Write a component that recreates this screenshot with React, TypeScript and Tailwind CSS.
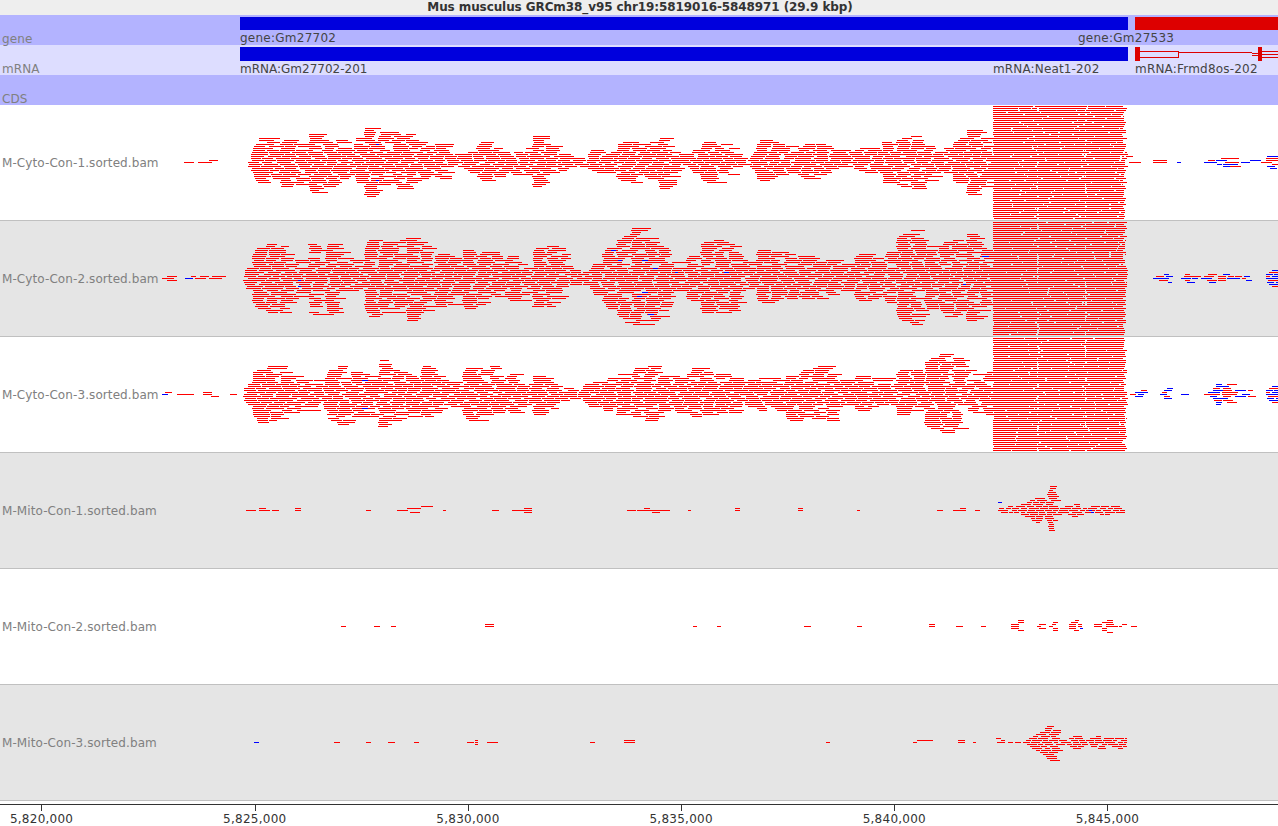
import { useMemo } from "react";

// [x, px above centre, px below centre]
type Env = [number, number, number][];
// [x1, x2, row, blue]
type Read = [number, number, number, number?];

interface TrackDef {
  name: string;
  shaded: boolean;
  env: Env;
  reads: Read[];
  block: boolean;
  seed: number;
}

const envCyto1: Env = [
  [246, 0, 0], [260, 24, 24], [270, 20, 14], [283, 20, 24], [297, 26, 24], [303, 4, 4], [310, 28, 28], [323, 24, 28],
  [327, 19, 21], [347, 24, 22], [352, 8, 6], [363, 34, 29], [373, 30, 32], [390, 22, 12], [403, 36, 34], [417, 20, 19],
  [427, 22, 14], [447, 20, 20], [455, 7, 3], [467, 8, 6], [482, 22, 19], [498, 22, 20], [507, 7, 6], [517, 16, 16],
  [522, 4, 4], [530, 24, 21], [543, 26, 26], [550, 14, 11], [563, 14, 9], [570, 3, 3], [580, 6, 6], [587, 1, 1],
  [590, 12, 11], [600, 12, 8], [605, 4, 4], [613, 16, 14], [633, 24, 23], [647, 21, 16], [660, 26, 26], [677, 16, 16],
  [685, 1, 1], [697, 16, 13], [710, 24, 24], [717, 14, 18], [727, 24, 24], [740, 7, 6], [748, 2, 2], [760, 21, 18],
  [777, 22, 20], [793, 14, 9], [810, 18, 18], [830, 14, 9], [847, 11, 3], [867, 16, 11], [887, 19, 19], [903, 24, 24],
  [920, 24, 23], [933, 16, 18], [942, 7, 6], [947, 16, 14], [970, 30, 30], [983, 26, 26], [994, 26, 26],
];

const envCyto2: Env = [
  [243, 1, 1], [247, 14, 14], [258, 30, 30], [273, 32, 32], [293, 28, 28], [302, 8, 6], [310, 36, 34], [318, 27, 29],
  [323, 1, 1], [328, 37, 38], [340, 38, 36], [347, 19, 14], [360, 14, 9], [368, 42, 41], [380, 40, 39], [390, 26, 19],
  [405, 44, 44], [413, 34, 36], [427, 33, 33], [437, 20, 23], [447, 27, 28], [457, 16, 14], [468, 30, 28], [480, 22, 24],
  [490, 31, 29], [503, 14, 13], [513, 24, 23], [522, 16, 14], [533, 30, 29], [543, 32, 29], [557, 29, 24], [567, 24, 13],
  [573, 7, 6], [580, 8, 8], [587, 4, 3], [595, 14, 14], [612, 32, 31], [630, 51, 50], [640, 41, 31], [655, 46, 46],
  [665, 36, 36], [677, 7, 8], [690, 24, 24], [713, 38, 36], [727, 29, 29], [740, 30, 30], [747, 11, 4], [753, 22, 14],
  [770, 34, 33], [780, 22, 18], [813, 22, 21], [833, 20, 19], [847, 16, 13], [860, 26, 24], [873, 22, 19], [882, 17, 14],
  [887, 28, 28], [905, 44, 41], [920, 42, 39], [933, 22, 23], [947, 44, 42], [960, 41, 38], [977, 39, 38], [988, 26, 24],
  [994, 26, 24],
];

const envCyto3: Env = [
  [243, 1, 1], [248, 14, 14], [262, 30, 30], [270, 24, 23], [287, 24, 21], [298, 22, 19], [302, 4, 6], [307, 14, 11],
  [317, 18, 16], [322, 4, 3], [330, 27, 26], [340, 32, 32], [353, 18, 21], [363, 24, 14], [370, 14, 23], [382, 34, 32],
  [393, 20, 23], [405, 29, 30], [413, 16, 14], [423, 24, 24], [437, 24, 14], [450, 16, 14], [457, 11, 9], [468, 26, 26],
  [483, 26, 24], [497, 24, 21], [507, 14, 13], [517, 26, 24], [523, 7, 13], [533, 20, 21], [548, 22, 23], [560, 11, 8],
  [580, 2, 3], [588, 16, 11], [600, 7, 14], [617, 26, 26], [627, 9, 14], [637, 26, 24], [653, 34, 34], [663, 19, 14],
  [677, 14, 18], [680, 9, 11], [693, 22, 19], [712, 26, 26], [723, 18, 18], [737, 20, 20], [743, 7, 6], [757, 20, 18],
  [770, 11, 11], [783, 20, 19], [793, 14, 24], [807, 24, 22], [833, 30, 28], [847, 11, 8], [870, 20, 20], [883, 7, 6],
  [900, 26, 24], [913, 28, 14], [927, 29, 28], [947, 42, 39], [963, 32, 31], [973, 26, 26], [978, 5, 3], [987, 20, 18],
  [994, 20, 18],
];

const envMito1: Env = [
  [995, 8, 8], [1003, 2, 2], [1010, 5, 2], [1018, 4, 3], [1027, 8, 6], [1038, 12, 12], [1047, 10, 10], [1051, 29, 28],
  [1055, 20, 15], [1060, 2, 2], [1073, 5, 5], [1080, 7, 5], [1085, 2, 2], [1092, 4, 2], [1103, 4, 4], [1117, 6, 4],
  [1125, 0, 2],
];

const envMito3: Env = [
  [995, 6, 4], [1005, 2, 1], [1025, 1, 1], [1030, 4, 4], [1040, 8, 8], [1052, 16, 16], [1057, 16, 16], [1063, 2, 2],
  [1077, 6, 6], [1087, 2, 2], [1102, 10, 8], [1108, 3, 3], [1120, 6, 6], [1127, 4, 4],
];

const rightMix: Read[] = [
  [1272, 1278, -4, 1], [1269, 1278, -3], [1266, 1273, -2, 1], [1274, 1278, -2, 1], [1266, 1270, -1], [1272, 1278, -1, 1],
  [1266, 1278, 0, 1], [1268, 1278, 1], [1267, 1274, 2, 1], [1276, 1278, 2, 1], [1269, 1278, 3, 1], [1272, 1278, 4],
];

const tracks: TrackDef[] = [
  {
    name: "M-Cyto-Con-1.sorted.bam",
    shaded: false,
    env: envCyto1,
    block: true,
    seed: 11,
    reads: [
      [184, 194, 0], [198, 212, 0], [209, 218, -1], [1129, 1141, 0], [1126, 1133, -3],
      [1153, 1167, -1], [1153, 1167, 0], [1177, 1181, 0, 1], [1204, 1217, 0, 1], [1208, 1215, -1],
      [1216, 1227, -1, 1], [1221, 1239, -2], [1217, 1222, 1, 1], [1223, 1238, 1, 1], [1223, 1230, 2, 1],
      [1230, 1241, 2], [1225, 1239, 0], [1241, 1250, 0, 1], [1250, 1261, -1, 1], [1261, 1272, 0],
      [1266, 1278, -2], [1267, 1278, -3, 1], [1266, 1278, -1], [1272, 1278, 1], [1267, 1275, 2, 1], [1270, 1277, 3, 1],
      [376, 379, -9, 1], [376, 379, 9, 1],
    ],
  },
  {
    name: "M-Cyto-Con-2.sorted.bam",
    shaded: true,
    env: envCyto2,
    block: true,
    seed: 23,
    reads: [
      [162, 174, 0], [167, 177, -1], [167, 177, 1], [185, 193, 0, 1], [191, 196, -1], [195, 206, 0], [200, 209, -1],
      [209, 222, 0], [212, 226, -1], [298, 301, 1, 1], [298, 301, 4, 1], [611, 616, -14, 1], [618, 622, -9, 1],
      [642, 648, -9, 1], [653, 658, -5, 1], [675, 678, -3, 1], [642, 648, 7, 1], [637, 642, 9, 1], [648, 654, 18, 1],
      [724, 729, -3, 1], [963, 966, 3, 1], [982, 989, -11, 1], [1164, 1169, -2, 1], [1156, 1164, -1], [1166, 1173, -1, 1],
      [1153, 1169, 0, 1], [1159, 1168, 1], [1168, 1172, 2, 1], [1185, 1190, -2], [1184, 1201, -1], [1181, 1191, 0, 1],
      [1192, 1198, 0, 1], [1185, 1190, 1], [1187, 1195, 2, 1], [1208, 1217, -2], [1204, 1214, -1], [1201, 1212, 0, 1],
      [1207, 1217, 1], [1209, 1216, 2, 1], [1223, 1230, -2, 1], [1218, 1226, -1], [1228, 1234, -1], [1235, 1242, -1],
      [1218, 1226, 0], [1227, 1240, 0, 1], [1242, 1246, 0], [1218, 1226, 1], [1244, 1250, -1, 1], [1246, 1252, 1, 1],
      ...rightMix,
    ],
  },
  {
    name: "M-Cyto-Con-3.sorted.bam",
    shaded: false,
    env: envCyto3,
    block: true,
    seed: 37,
    reads: [
      [162, 168, 0, 1], [165, 172, -1], [177, 194, 0], [203, 212, -1], [203, 212, 0], [211, 219, 1], [230, 237, 0],
      [362, 368, -7, 1], [362, 368, 7, 1], [1130, 1136, 0], [1141, 1147, -2], [1135, 1148, -1, 1], [1138, 1144, 0, 1],
      [1135, 1143, 1, 1], [1167, 1173, -3, 1], [1164, 1172, -2, 1], [1162, 1167, -1], [1160, 1167, 0, 1], [1164, 1170, 1],
      [1164, 1172, 2, 1], [1181, 1189, 0, 1], [1216, 1222, -5, 1], [1227, 1237, -5], [1216, 1229, -4, 1], [1213, 1220, -3],
      [1223, 1231, -3], [1213, 1223, -2, 1], [1223, 1232, -2], [1235, 1246, -2, 1], [1248, 1253, -2], [1208, 1220, -1, 1],
      [1222, 1238, -1], [1204, 1220, 0], [1222, 1237, 0], [1242, 1250, 0, 1], [1210, 1217, 1, 1], [1223, 1231, 1],
      [1235, 1246, 1, 1], [1248, 1256, 1], [1213, 1228, 2, 1], [1214, 1222, 3], [1223, 1233, 3], [1216, 1222, 4, 1],
      [1227, 1237, 4], [1216, 1221, 5, 1], ...rightMix,
    ],
  },
  {
    name: "M-Mito-Con-1.sorted.bam",
    shaded: true,
    env: envMito1,
    block: false,
    seed: 41,
    reads: [
      [246, 256, 0], [259, 270, 0], [259, 266, -1], [272, 279, 0], [295, 301, -1], [295, 301, 0], [366, 371, 0],
      [397, 408, 0], [407, 421, -1], [421, 433, -2], [410, 420, 1], [443, 446, 0], [492, 499, 0], [512, 532, 0],
      [524, 532, -1], [524, 532, 1], [627, 636, 0], [637, 650, 0], [644, 650, -1], [650, 670, 0], [652, 660, 1],
      [688, 691, 0], [735, 740, 0], [735, 740, -1], [798, 803, 0], [798, 803, -1], [857, 860, 0], [937, 943, 0],
      [953, 966, 0], [960, 966, -1], [975, 980, 0], [998, 1002, -4, 1], [1089, 1092, 0, 1], [1091, 1094, 1, 1],
    ],
  },
  {
    name: "M-Mito-Con-2.sorted.bam",
    shaded: false,
    env: [],
    block: false,
    seed: 53,
    reads: [
      [341, 346, 0], [374, 380, 0], [391, 396, 0], [485, 494, 0], [485, 494, -1], [693, 697, 0], [717, 721, 0],
      [804, 811, 0], [857, 862, 0], [929, 935, -1], [929, 935, 0], [956, 963, 0], [981, 986, 0], [1011, 1019, -1],
      [1011, 1019, 0], [1011, 1019, 1], [1018, 1024, -3], [1018, 1024, -2], [1018, 1024, 2], [1037, 1041, 0],
      [1039, 1046, -1], [1039, 1046, 1], [1049, 1053, 0], [1052, 1056, -1], [1053, 1058, -2], [1053, 1058, 1],
      [1053, 1058, 2], [1069, 1076, -1], [1069, 1076, 0], [1069, 1076, 1], [1071, 1078, -2], [1075, 1079, -3],
      [1074, 1079, 2], [1078, 1082, -1], [1078, 1082, 0], [1080, 1083, 1, 1], [1094, 1102, -1], [1094, 1102, 0],
      [1102, 1107, -2], [1102, 1107, 1], [1102, 1107, 2], [1106, 1114, -1], [1106, 1114, 0], [1107, 1113, -3],
      [1107, 1113, -2], [1107, 1113, 3], [1114, 1118, 0], [1119, 1122, 0], [1122, 1127, -1], [1131, 1137, 0],
    ],
  },
  {
    name: "M-Mito-Con-3.sorted.bam",
    shaded: true,
    env: envMito3,
    block: false,
    seed: 67,
    reads: [
      [254, 259, 0, 1], [334, 340, 0], [366, 371, 0], [388, 395, 0], [414, 419, 0], [467, 474, 0], [475, 478, -1],
      [475, 478, 0], [475, 478, 1], [487, 498, 0], [590, 595, 0], [624, 635, -1], [624, 635, 0], [826, 830, 0],
      [917, 933, -1], [913, 917, 0], [958, 965, 0], [958, 965, -1], [973, 976, 0],
    ],
  },
];

const axisLabels = ["5,820,000", "5,825,000", "5,830,000", "5,835,000", "5,840,000", "5,845,000"];
const axisTicks = [41, 255, 468, 681, 894, 1107];

const mulberry = (seed: number) => () => {
  seed = (seed + 0x6d2b79f5) | 0;
  let t = Math.imul(seed ^ (seed >>> 15), 1 | seed);
  t = (t + Math.imul(t ^ (t >>> 7), 61 | t)) ^ t;
  return ((t ^ (t >>> 14)) >>> 0) / 4294967296;
};

const limitAt = (env: Env, x: number, row: number) => {
  if (env.length === 0 || x < env[0][0] || x > env[env.length - 1][0]) return -1;
  for (let i = 0; i < env.length - 1; i++) {
    const a = env[i];
    const b = env[i + 1];
    if (x >= a[0] && x <= b[0]) {
      const f = (x - a[0]) / (b[0] - a[0] || 1);
      const side = row < 0 ? 1 : 2;
      return a[side] + (b[side] - a[side]) * f;
    }
  }
  return -1;
};

const STACK = 14;

const buildReads = (track: TrackDef) => {
  const rnd = mulberry(track.seed);
  const out: Read[] = [...track.reads];
  const rows = 28;
  const maxRow = 26;

  // pile-ups grow in stacks: away from the centre the reads start at the same few places
  const jag: number[] = [];
  for (let i = 0; i < 200; i++) jag.push(0.88 + rnd() * 0.34);

  if (track.env.length > 0) {
    const startX = track.env[0][0];
    const endX = track.env[track.env.length - 1][0];
    for (let row = -maxRow; row <= maxRow; row++) {
      const dist = Math.abs(row) * 2;
      let x = startX + rnd() * 6;
      while (x < endX) {
        const stacked = track.block && dist > 10;
        const phase = x % STACK;
        if (stacked && phase > 5 + rnd() * 4) {
          x += STACK - phase + rnd() * 2;
          continue;
        }
        const len = Math.round(track.block ? 8 + rnd() * rnd() * 16 + rnd() * 5 : 4 + rnd() * 7);
        const bucket = Math.floor(x / STACK) % 200;
        const fitsStart = limitAt(track.env, x + 1, row) * jag[bucket] >= dist;
        const fitsEnd = limitAt(track.env, Math.min(x + len * 0.7, endX), row) * 1.2 >= dist;
        if (dist === 0 || (fitsStart && fitsEnd)) {
          const x2 = Math.min(x + len, endX);
          out.push([Math.round(x), Math.round(x2), row]);
          x = x2 + 1 + Math.floor(rnd() * rnd() * (track.block ? 6 : 4));
        } else {
          x += 1 + Math.floor(rnd() * 3);
        }
      }
    }
  }

  if (track.block) {
    for (let row = -rows; row <= rows; row++) {
      const near = Math.abs(row) < 6;
      const right = 1123 + Math.floor(rnd() * 5) + (near ? 1 : 0);
      let x = 993 + (rnd() < 0.15 ? 1 : 0);
      while (x < right) {
        let x2 = Math.min(x + 12 + Math.floor(rnd() * 45), right);
        for (const cut of [1037, 1085]) {
          if (x < cut && x2 > cut && rnd() < 0.35) x2 = cut;
        }
        out.push([x, x2, row]);
        x = x2 + (rnd() < 0.55 ? 1 : 2);
      }
    }
  }
  return out;
};

const Track = ({ track }: { track: TrackDef }) => {
  const paths = useMemo(() => {
    const reads = buildReads(track);
    const toPath = (list: Read[]) =>
      list.map(([x1, x2, row]) => `M${x1} ${57.5 + row * 2}H${x2}`).join("");
    return {
      red: toPath(reads.filter((r) => !r[3])),
      blue: toPath(reads.filter((r) => r[3])),
    };
  }, [track]);

  return (
    <div
      className={`relative flex h-[116px] items-center border-b border-[#c0c0c0] pl-[2px] pt-[1px] ${
        track.shaded ? "bg-[#e5e5e5]" : "bg-white"
      }`}
    >
      <svg width={1278} height={115} className="absolute inset-0" shapeRendering="crispEdges">
        <path d={paths.red} stroke="#ff0000" strokeWidth={1} fill="none" />
        <path d={paths.blue} stroke="#0000ff" strokeWidth={1} fill="none" />
      </svg>
      <span className="relative text-[12px] leading-[14px] tracking-[0.09px] text-[#808080]">{track.name}</span>
    </div>
  );
};

const FeatureRow = ({ label, bg, children }: { label: string; bg: string; children?: React.ReactNode }) => (
  <div className={`flex h-[30px] ${bg}`}>
    <div className="flex w-[240px] items-end pl-[2px]">
      <span className="mb-[-1px] text-[12px] leading-[14px] tracking-[0.1px] text-[#808080]">{label}</span>
    </div>
    <div className="flex flex-1 flex-col gap-y-[2px] pt-[2px]">{children}</div>
  </div>
);

const labelClass = "text-[12px] leading-[13px] text-[#444444]";

export default function App() {
  return (
    <div className="h-[826px] w-[1278px] overflow-hidden bg-white font-['DejaVu_Sans',sans-serif]">
      <div className="h-[15px] bg-[#eeeeee] pl-[2px] text-center text-[12px] font-bold leading-[15px] tracking-[-0.09px] text-[#333333]">
        Mus musculus GRCm38_v95 chr19:5819016-5848971 (29.9 kbp)
      </div>

      <FeatureRow label="gene" bg="bg-[#b3b3ff]">
        <div className="flex h-[14px] gap-x-[7px]">
          <div className="w-[888px] bg-[#0000dd]" />
          <div className="flex-1 bg-[#dd0000]" />
        </div>
        <div className="flex tracking-[0.25px]">
          <span className={`w-[838px] ${labelClass}`}>gene:Gm27702</span>
          <span className={labelClass}>gene:Gm27533</span>
        </div>
      </FeatureRow>

      <FeatureRow label="mRNA" bg="bg-[#ddddff]">
        <div className="flex h-[14px] gap-x-[7px]">
          <div className="w-[888px] bg-[#0000dd]" />
          <svg width={143} height={14} className="block" shapeRendering="crispEdges">
            <rect x={0} y={0} width={5} height={14} fill="#dd0000" />
            <rect x={123} y={0} width={4} height={14} fill="#dd0000" />
            <path
              d="M5 4.5H43M5 10.5H43M43 5.5H117M117 6.5H123M117 8.5H123M127 4.5H143M127 7.5H143M127 10.5H143M43.5 4V11"
              stroke="#dd0000"
              fill="none"
            />
          </svg>
        </div>
        <div className="flex">
          <span className={`w-[753px] ${labelClass}`}>mRNA:Gm27702-201</span>
          <span className={`w-[142px] tracking-[0.15px] ${labelClass}`}>mRNA:Neat1-202</span>
          <span className={`tracking-[0.2px] ${labelClass}`}>mRNA:Frmd8os-202</span>
        </div>
      </FeatureRow>

      <FeatureRow label="CDS" bg="bg-[#b3b3ff]" />

      {tracks.map((track) => (
        <Track key={track.name} track={track} />
      ))}

      <svg width={1278} height={11} className="block" shapeRendering="crispEdges">
        <path d="M0 3.5H1278" stroke="#333333" />
        {axisTicks.map((x) => (
          <path key={x} d={`M${x + 0.5} 3V10`} stroke="#333333" />
        ))}
      </svg>
      <div className="ml-[-65px] flex">
        {axisLabels.map((label) => (
          <span
            key={label}
            className="w-[213.2px] shrink-0 text-center text-[12px] leading-[14px] tracking-[0.25px] text-[#333333]"
          >
            {label}
          </span>
        ))}
      </div>
    </div>
  );
}
